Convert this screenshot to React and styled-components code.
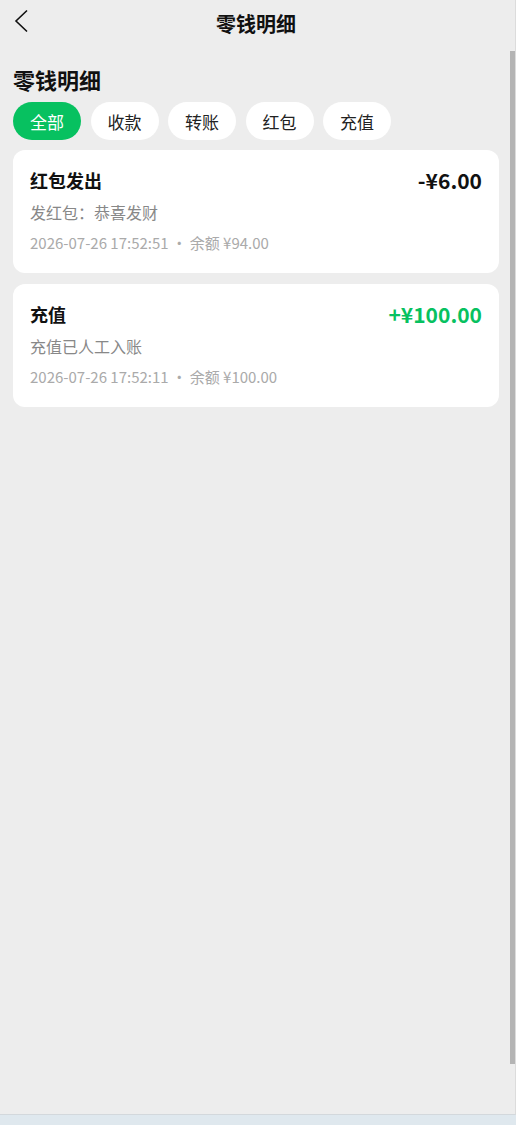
import React from 'react';
import styled, { createGlobalStyle } from 'styled-components';

const GlobalStyle = createGlobalStyle`
    html, body {
        margin: 0;
        padding: 0;
        background: #dfe8ee;
    }
    body {
        font-family: "Noto Sans CJK SC", "Noto Sans", sans-serif;
        color: #111;
    }
`;

const Frame = styled.div`
    width: 515px;
    height: 1114px;
    display: flex;
    flex-direction: column;
    background: #ededed;
    border-right: 1px solid #dcdcdc;
    border-bottom: 1px solid #d3d8dc;
`;

const TopBar = styled.div`
    height: 50px;
    flex-shrink: 0;
    display: grid;
    grid-template-columns: 60px 1fr 60px;
    align-items: center;
`;

const BackButton = styled.button`
    border: 0;
    background: none;
    padding: 0 0 8px 13px;
    height: 50px;
    display: flex;
    align-items: center;
    cursor: pointer;
`;

const TopTitle = styled.div`
    text-align: center;
    font-size: 20px;
    font-weight: 700;
    line-height: 50px;
    margin-top: -2px;
    padding-right: 3px;
`;

const Body = styled.div`
    flex: 1;
    display: flex;
    min-height: 0;
`;

const Scroller = styled.div`
    flex: 1;
    overflow: hidden;
`;

const Rail = styled.div`
    width: 5px;
    padding-top: 1px;
`;

const Thumb = styled.div`
    height: 1013px;
    background: #b4b4b4;
`;

const Content = styled.div`
    padding: 14px 11px 14px 13px;
`;

const Heading = styled.h1`
    margin: 0;
    font-size: 22px;
    line-height: 30px;
    font-weight: 700;
`;

const Tabs = styled.div`
    display: flex;
    gap: 9.5px;
    margin-top: 8px;
`;

const Tab = styled.button`
    height: 38px;
    padding: 0 17px;
    border: 0;
    border-radius: 19px;
    font-family: inherit;
    font-size: 17px;
    background: ${props => props.active ? '#07c160' : '#fff'};
    color: ${props => props.active ? '#fff' : '#222'};
    cursor: pointer;
`;

const List = styled.div`
    display: flex;
    flex-direction: column;
    gap: 11px;
    margin-top: 10px;
`;

const Card = styled.div`
    background: #fff;
    border-radius: 12px;
    padding: 16px 17px 20px;
`;

const Row = styled.div`
    display: flex;
    justify-content: space-between;
    align-items: center;
    height: 28px;
`;

const Title = styled.div`
    font-size: 18px;
    font-weight: 700;
`;

const Amount = styled.div`
    font-size: 21px;
    font-weight: 700;
    color: ${props => props.plus ? '#07c160' : '#111'};
`;

const Desc = styled.div`
    margin-top: 7px;
    font-size: 16px;
    line-height: 22px;
    color: #888;
`;

const Meta = styled.div`
    margin-top: 10px;
    font-size: 15px;
    line-height: 20px;
    color: #aaa;
`;

const Dot = styled.span`
    margin: 0 3px;
`;

const BackIcon = () => (
    <svg width="16" height="24" viewBox="0 0 16 24">
        <path d="M14 1.5 L3 12 L14 22.5" fill="none" stroke="#111" strokeWidth="1.6" />
    </svg>
);

const records = [
    { title: '红包发出', amount: '-¥6.00', plus: false, desc: '发红包：恭喜发财', time: '2026-07-26 17:52:51', balance: '¥94.00' },
    { title: '充值', amount: '+¥100.00', plus: true, desc: '充值已人工入账', time: '2026-07-26 17:52:11', balance: '¥100.00' },
];

const tabs = ['全部', '收款', '转账', '红包', '充值'];

export default function App() {
    return (
        <Frame>
            <GlobalStyle />
            <TopBar>
                <BackButton><BackIcon /></BackButton>
                <TopTitle>零钱明细</TopTitle>
                <div />
            </TopBar>
            <Body>
                <Scroller>
                    <Content>
                        <Heading>零钱明细</Heading>
                        <Tabs>
                            {tabs.map((t, i) => <Tab key={t} active={i === 0}>{t}</Tab>)}
                        </Tabs>
                        <List>
                            {records.map(r => (
                                <Card key={r.time}>
                                    <Row>
                                        <Title>{r.title}</Title>
                                        <Amount plus={r.plus}>{r.amount}</Amount>
                                    </Row>
                                    <Desc>{r.desc}</Desc>
                                    <Meta>{r.time}<Dot>•</Dot>余额 {r.balance}</Meta>
                                </Card>
                            ))}
                        </List>
                    </Content>
                </Scroller>
                <Rail><Thumb /></Rail>
            </Body>
        </Frame>
    );
}
